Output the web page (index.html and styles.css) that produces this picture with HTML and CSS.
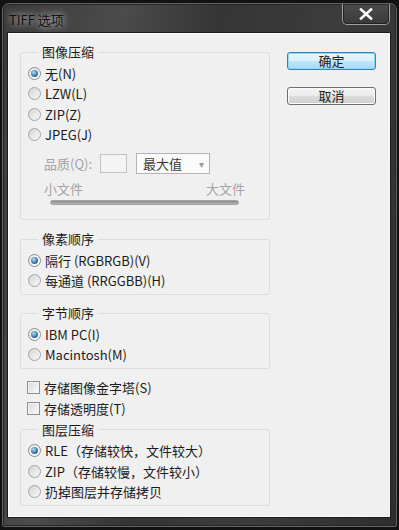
FILE: index.html
```html
<!DOCTYPE html>
<html>
  <head>
    <meta charset="utf-8" />
    <title>TIFF 选项</title>
    <link rel="stylesheet" href="styles.css">
  </head>
  <body>
    <div class="window">
      <div class="titlebar">
        <span class="title">TIFF 选项</span>
        <span class="close">
          <svg width="14" height="12" viewBox="0 0 14 12">
            <path d="M2 1.5 L12 10.5 M12 1.5 L2 10.5" stroke="#fff" stroke-width="2.6" stroke-linecap="square" />
          </svg>
        </span>
      </div>

      <div class="client">
        <div class="main">
          <fieldset class="group first">
            <legend>图像压缩</legend>
            <div class="options">
              <div class="option"><span class="radio checked"><span class="dot"></span></span>无(N)</div>
              <div class="option"><span class="radio"></span>LZW(L)</div>
              <div class="option"><span class="radio"></span>ZIP(Z)</div>
              <div class="option"><span class="radio"></span>JPEG(J)</div>
            </div>
            <div class="quality">
              <span class="quality-label">品质(Q):</span>
              <span class="quality-input"></span>
              <span class="select">最大值<span class="arrow">▾</span></span>
            </div>
            <div class="size-labels">
              <span>小文件</span>
              <span>大文件</span>
            </div>
            <div class="slider"></div>
          </fieldset>

          <fieldset class="group gap-10">
            <legend>像素顺序</legend>
            <div class="options">
              <div class="option"><span class="radio checked"><span class="dot"></span></span>隔行 (RGBRGB)(V)</div>
              <div class="option"><span class="radio"></span>每通道 (RRGGBB)(H)</div>
            </div>
          </fieldset>

          <fieldset class="group gap-9">
            <legend>字节顺序</legend>
            <div class="options">
              <div class="option"><span class="radio checked"><span class="dot"></span></span>IBM PC(I)</div>
              <div class="option"><span class="radio"></span>Macintosh(M)</div>
            </div>
          </fieldset>

          <div class="checks">
            <div class="check-row"><span class="checkbox"></span>存储图像金字塔(S)</div>
            <div class="check-row"><span class="checkbox"></span>存储透明度(T)</div>
          </div>

          <fieldset class="group gap-2">
            <legend>图层压缩</legend>
            <div class="options">
              <div class="option"><span class="radio checked"><span class="dot"></span></span>RLE（存储较快，文件较大）</div>
              <div class="option"><span class="radio"></span>ZIP（存储较慢，文件较小）</div>
              <div class="option"><span class="radio"></span>扔掉图层并存储拷贝</div>
            </div>
          </fieldset>
        </div>

        <div class="actions">
          <button class="btn default">确定</button>
          <button class="btn">取消</button>
        </div>
      </div>
    </div>
  </body>
</html>
```

FILE: styles.css
```css
body {
  margin: 0;
  padding: 0;
  width: 399px;
  height: 530px;
  overflow: hidden;
  background-color: #121212;
  font-family: "Noto Sans CJK SC", "Microsoft YaHei", sans-serif;
  font-size: 13px;
  color: #1b1b1b;
}
.window {
  margin: 3px 2px 3px 2px;
  width: 395px;
  height: 524px;
  box-sizing: border-box;
  padding: 0 6px 9px 5px;
  border: 1px solid #646464;
  border-radius: 7px 7px 2px 2px;
  background: linear-gradient(100deg, #3a3a3a 0%, #4b4b4b 25%, #353535 45%, #3c3c3c 70%, #2e2e2e 100%);
  box-shadow: inset 0 0 0 1px #262626;
  display: flex;
  flex-direction: column;
}
.titlebar {
  height: 29px;
  display: flex;
  justify-content: space-between;
  align-items: flex-start;
}
.title {
  margin-top: 7px;
  margin-left: 1px;
  line-height: 18px;
  font-size: 13px;
  color: #111;
  text-shadow: 0 0 6px rgba(255, 255, 255, 0.7), 0 0 12px rgba(255, 255, 255, 0.5);
}
.close {
  width: 48px;
  height: 21px;
  box-sizing: border-box;
  border: 1px solid rgba(230, 230, 230, 0.55);
  border-top: none;
  border-radius: 0 0 5px 5px;
  background: linear-gradient(#4c4c4c, #3a3a3a);
  box-shadow: inset 0 0 0 1px rgba(0, 0, 0, 0.45);
  display: flex;
  align-items: center;
  justify-content: center;
}
.client {
  flex: 1;
  display: flex;
  background-color: #f0f0f0;
  border: 1px solid #fbfbfb;
  box-shadow: 0 0 0 1px #1c1c1c;
  padding: 9px 0 0 11px;
}
.main {
  width: 250px;
  display: flex;
  flex-direction: column;
}
.group {
  margin: 0;
  padding: 0 0 3px 7px;
  border: 1px solid #d5dfe5;
  border-radius: 3px;
  min-width: 0;
}
.group.first {
  padding-bottom: 0;
}
.gap-10 {
  margin-top: 10px;
}
.gap-9 {
  margin-top: 9px;
}
.gap-2 {
  margin-top: 2px;
}
legend {
  margin-left: 10px;
  padding: 0 4px;
  line-height: 18px;
  font-size: 13px;
}
.options {
  margin-top: 2px;
  display: flex;
  flex-direction: column;
}
.option,
.check-row {
  height: 20.5px;
  display: flex;
  align-items: center;
  gap: 4px;
  white-space: nowrap;
}
.radio {
  width: 13px;
  height: 13px;
  box-sizing: border-box;
  border-radius: 50%;
  border: 1px solid #a3a3a3;
  background: linear-gradient(135deg, #d4d4d4, #f9f9f9);
  display: flex;
  align-items: center;
  justify-content: center;
}
.radio.checked {
  border-color: #8a8a8a;
  background: linear-gradient(135deg, #e8e8e8, #ffffff);
}
.dot {
  width: 7px;
  height: 7px;
  border-radius: 50%;
  background: radial-gradient(circle at 40% 35%, #b6e0f7 0%, #3c78ab 55%, #1f4c78 100%);
}
.quality {
  margin-top: 7px;
  padding-left: 16px;
  height: 22px;
  display: flex;
  align-items: center;
  color: #a3a3a3;
}
.quality-label {
  width: 56px;
}
.quality-input {
  width: 27px;
  height: 19px;
  box-sizing: border-box;
  border: 1px solid #c2c2c2;
  background-color: #f4f4f4;
}
.select {
  margin-left: 9px;
  width: 74px;
  height: 21px;
  box-sizing: border-box;
  border: 1px solid #b4b4b4;
  background-color: #fbfbfb;
  color: #3a3a3a;
  padding-left: 6px;
  display: flex;
  align-items: center;
  justify-content: space-between;
}
.arrow {
  width: 16px;
  font-size: 10px;
  color: #9a9a9a;
  text-align: center;
}
.size-labels {
  margin-top: 7px;
  margin-left: 16px;
  width: 201px;
  height: 16px;
  line-height: 16px;
  display: flex;
  justify-content: space-between;
  color: #a3a3a3;
}
.slider {
  margin: 3px 0 14px 22px;
  width: 189px;
  height: 5px;
  box-sizing: border-box;
  border: 1px solid #a2a2a2;
  border-radius: 3px;
  background: linear-gradient(#8e8e8e, #b4b4b4);
}
.checks {
  margin-top: 7.5px;
  padding-left: 7px;
  display: flex;
  flex-direction: column;
}
.check-row {
  height: 21px;
}
.checkbox {
  width: 13px;
  height: 13px;
  box-sizing: border-box;
  border: 1px solid #8f8f8f;
  background: linear-gradient(135deg, #d8d8d8, #fbfbfb);
  box-shadow: inset 0 0 0 1px #f4f4f4;
}
.actions {
  margin-left: 17px;
  padding-top: 9px;
  display: flex;
  flex-direction: column;
  gap: 17px;
}
.btn {
  width: 89px;
  height: 18px;
  padding: 0;
  font-family: "Noto Sans CJK SC", "Microsoft YaHei", sans-serif;
  font-size: 13px;
  line-height: 16px;
  color: #1b1b1b;
  border: 1px solid #707070;
  border-radius: 3px;
  background: linear-gradient(#f4f4f4 0%, #ebebeb 50%, #dcdcdc 51%, #cfcfcf 100%);
  box-shadow: inset 0 0 0 1px #fbfbfb;
}
.btn.default {
  border-color: #3c7fb1;
  background: linear-gradient(#e6f5fd 0%, #d9f0fc 50%, #bee6fd 51%, #a7d9f5 100%);
  box-shadow: inset 0 0 0 1px #8ed8f8;
}
```
